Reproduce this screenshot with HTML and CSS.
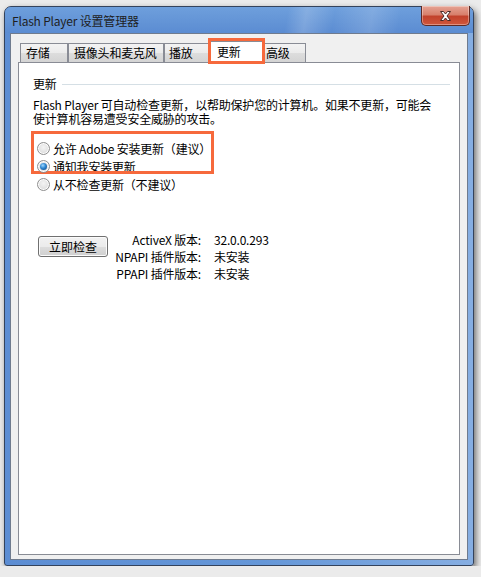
FILE: index.html
```html
<!DOCTYPE html>
<html lang="zh-CN">
<head>
    <meta charset="UTF-8">
    <title>Flash Player 设置管理器</title>
    <link rel="stylesheet" href="styles.css">
</head>
<body>

    <div class="window">
        <div class="titlebar">
            <span class="title">Flash Player 设置管理器</span>
            <div class="close">
                <svg width="47" height="18" viewBox="0 0 47 18">
                    <path d="M18.5 4.5 L21.5 4.5 L23.5 7 L25.5 4.5 L28.5 4.5 L25 9 L28.5 13.5 L25.5 13.5 L23.5 11 L21.5 13.5 L18.5 13.5 L22 9 Z"
                          fill="#fff" stroke="#4a2a26" stroke-width="1" stroke-linejoin="round"/>
                </svg>
            </div>
        </div>

        <div class="client">
            <div class="tabs">
                <div class="tab tab-storage">存储</div>
                <div class="tab tab-camera">摄像头和麦克风</div>
                <div class="tab tab-play">播放</div>
                <div class="tab active">更新</div>
                <div class="tab tab-adv">高级</div>
            </div>

            <div class="panel">
                <div class="group-title">
                    <span>更新</span>
                    <i class="rule"></i>
                </div>

                <p class="desc">Flash Player 可自动检查更新，以帮助保护您的计算机。如果不更新，可能会</p>
                <p class="desc second">使计算机容易遭受安全威胁的攻击。</p>

                <div class="options">
                    <div class="mark"></div>
                    <label class="option"><span class="radio"></span>允许 Adobe 安装更新（建议）</label>
                    <label class="option"><span class="radio checked"></span>通知我安装更新</label>
                    <label class="option"><span class="radio"></span>从不检查更新（不建议）</label>
                </div>

                <div class="check">
                    <button class="btn">立即检查</button>
                    <div class="versions">
                        <span class="label">ActiveX 版本:</span>
                        <span>32.0.0.293</span>
                        <span class="label">NPAPI 插件版本:</span>
                        <span>未安装</span>
                        <span class="label">PPAPI 插件版本:</span>
                        <span>未安装</span>
                    </div>
                </div>
            </div>
        </div>
    </div>

</body>
</html>
```

FILE: styles.css
```css
*, *::before, *::after {
    margin: 0;
    padding: 0;
    box-sizing: border-box;
}

body {
    background: #ebebeb;
    font-family: "Noto Sans CJK SC", sans-serif;
    font-size: 12px;
    letter-spacing: -0.2px;
    color: #000;
    overflow: hidden;
}

.window {
    width: 470px;
    height: 560px;
    margin: 6px 0 0 4px;
    border: 1px solid #34435c;
    border-radius: 7px 7px 3px 3px;
    background: linear-gradient(to right, #5c8dd3 0%, #6597d8 55%, #86aee2 100%);
    box-shadow: 2px 3px 6px rgba(0, 0, 0, 0.55);
}

.titlebar {
    display: flex;
    height: 26px;
    padding-left: 7px;
    border-radius: 6px 6px 0 0;
    background:
        linear-gradient(100deg, transparent 60%, rgba(255, 255, 255, 0.18) 64%, transparent 70%, rgba(255, 255, 255, 0.15) 78%, transparent 84%),
        linear-gradient(to bottom, #6e9fdc 0%, #5b8cd2 100%);
}

.title {
    margin-top: 7px;
    line-height: 14px;
    color: #1e1e1e;
}

.close {
    width: 49px;
    height: 20px;
    margin: -1px 3px 0 auto;
    border: 1px solid #5e2a24;
    border-top: none;
    border-radius: 0 0 5px 5px;
    background: linear-gradient(to bottom, #e5a394 0%, #d8806c 45%, #c2422c 55%, #d0573d 100%);
    box-shadow: inset 0 0 0 1px rgba(255, 255, 255, 0.35);
    display: flex;
    justify-content: center;
    align-items: center;
}

.client {
    margin: 0 5px 5px;
    height: 527px;
    border: 1px solid #6f7b8e;
    background: #f0f0f0;
    padding: 7px 7px 4px;
}

.tabs {
    display: flex;
    align-items: flex-end;
    height: 21px;
}

.tab {
    height: 19px;
    border: 1px solid #898c95;
    border-bottom: none;
    background: linear-gradient(to bottom, #f3f3f3 0%, #ebebeb 50%, #dddddd 51%, #d4d4d4 100%);
    line-height: 17px;
    padding-left: 5px;
    white-space: nowrap;
}

.tab-storage {
    width: 48px;
    margin-left: 2px;
}

.tab-camera {
    width: 96px;
}

.tab-play {
    width: 46px;
    padding-left: 4px;
}

.tab.active {
    position: relative;
    z-index: 1;
    width: 56px;
    height: 22px;
    margin: 0 0 -1px -2px;
    background: #fff;
    padding-left: 8px;
    line-height: 19px;
}

/* orange highlight around the selected tab */
.tab.active::after {
    content: "";
    position: absolute;
    left: -1px;
    top: -4px;
    width: 57px;
    height: 26px;
    border: 3px solid #f6693c;
}

.tab-adv {
    width: 44px;
    margin-left: -2px;
    padding-left: 3px;
}

.panel {
    height: 493px;
    border: 1px solid #898c95;
    background: #fff;
    padding: 14px 9px 0 14px;
}

.group-title {
    display: flex;
    align-items: center;
    line-height: 14px;
}

.rule {
    flex: 1;
    height: 1px;
    margin-left: 5px;
    background: #d5dfe5;
}

.desc {
    margin-top: 7px;
    line-height: 14px;
    white-space: nowrap;
}

.desc.second {
    margin-top: 0;
}

.options {
    position: relative;
    margin-top: 13px;
}

.mark {
    position: absolute;
    left: -2px;
    top: -8px;
    width: 183px;
    height: 43px;
    border: 3px solid #f6693c;
}

.option {
    display: flex;
    align-items: center;
    height: 18px;
    padding-left: 4px;
    white-space: nowrap;
}

.radio {
    width: 13px;
    height: 13px;
    margin-right: 3px;
    border: 1px solid #8f8f8f;
    border-radius: 50%;
    background: radial-gradient(circle at 50% 40%, #f4f4f4 0%, #e4e4e4 50%, #d0d0d0 100%);
    box-shadow: inset 0 0 0 1px #fdfdfd;
    position: relative;
}

.radio.checked::after {
    content: "";
    position: absolute;
    left: 2px;
    top: 2px;
    width: 7px;
    height: 7px;
    border-radius: 50%;
    background: radial-gradient(circle at 40% 35%, #9fd8ff 0%, #2e86d0 45%, #0d3f7a 100%);
}

.check {
    display: flex;
    align-items: flex-start;
    margin-top: 38px;
}

.btn {
    width: 70px;
    height: 21px;
    margin: 5px 0 0 5px;
    border: 1px solid #707070;
    border-radius: 3px;
    background: linear-gradient(to bottom, #f2f2f2 0%, #ebebeb 50%, #dddddd 51%, #cfcfcf 100%);
    box-shadow: inset 0 0 0 1px #fbfbfb;
    font: inherit;
    font-size: 12px;
    line-height: 17px;
    color: #000;
}

.versions {
    display: grid;
    grid-template-columns: 93px auto;
    column-gap: 13px;
    line-height: 17px;
}

.versions .label {
    text-align: right;
}
```
